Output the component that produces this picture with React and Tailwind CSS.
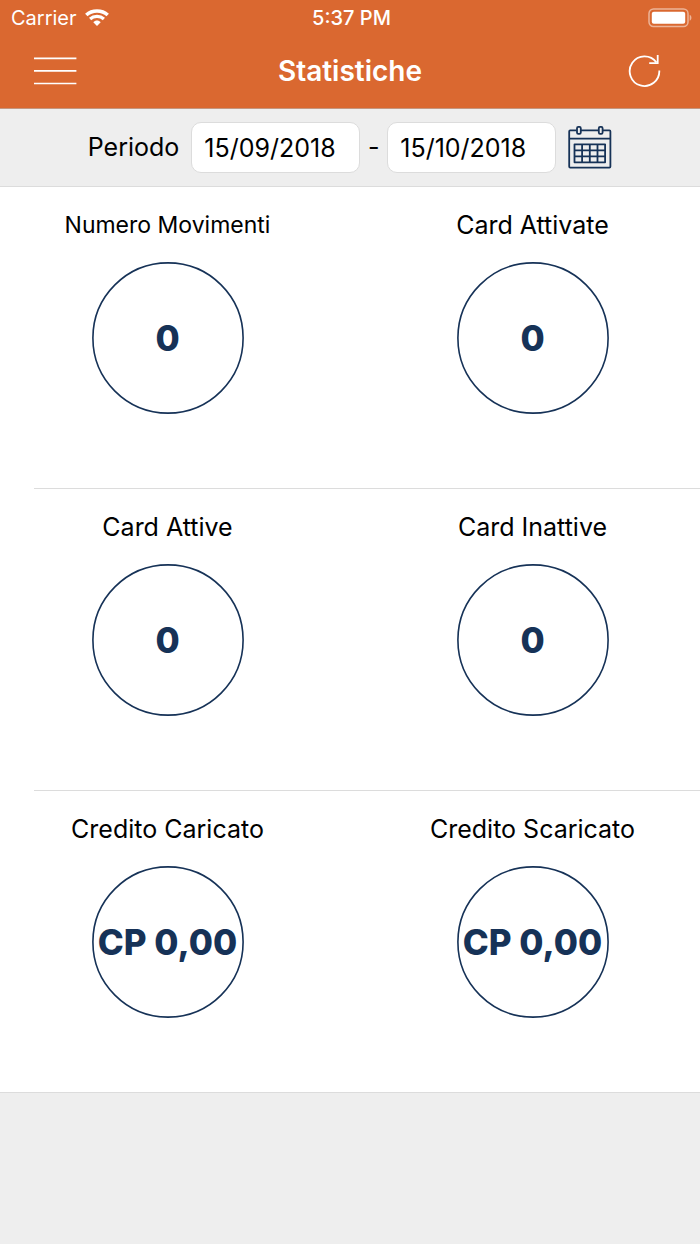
import { useState } from 'react'

const rows = [
  [
    { label: 'Numero Movimenti', value: '0', size: 'text-[23px]' },
    { label: 'Card Attivate', value: '0', size: 'text-[25px]' },
  ],
  [
    { label: 'Card Attive', value: '0', size: 'text-[25px]' },
    { label: 'Card Inattive', value: '0', size: 'text-[25px]' },
  ],
  [
    { label: 'Credito Caricato', value: 'CP 0,00', size: 'text-[25px]' },
    { label: 'Credito Scaricato', value: 'CP 0,00', size: 'text-[25px]' },
  ],
]

function WifiIcon() {
  return (
    <svg width="24" height="18" viewBox="0 0 24 18" fill="none" stroke="white" aria-hidden="true">
      <path d="M1.3 6C7.1 0.7 16.9 0.7 22.7 6" strokeWidth="3.6" />
      <path d="M5.1 10C8.8 6.6 15.2 6.6 18.9 10" strokeWidth="3.2" />
      <path d="M8.3 13.2C10.4 10.9 13.6 10.9 15.7 13.2L12 17Z" fill="white" stroke="none" />
    </svg>
  )
}

function BatteryIcon() {
  return (
    <svg width="44" height="20" viewBox="0 0 44 20" fill="none" aria-hidden="true">
      <rect x="1" y="1" width="39" height="17.5" rx="4.5" stroke="white" strokeOpacity="0.5" strokeWidth="1.5" />
      <rect x="3.8" y="3.8" width="33.4" height="12" rx="2" fill="white" />
      <path d="M41.7 6.8C44 7.8 44 11.8 41.7 12.8Z" fill="white" fillOpacity="0.5" />
    </svg>
  )
}

function MenuIcon() {
  return (
    <svg width="43" height="30" viewBox="0 0 43 30" stroke="white" strokeWidth="1.7" aria-hidden="true">
      <path d="M0 2.3H42.4M0 14.9H42.4M0 27.5H42.4" />
    </svg>
  )
}

function ReloadIcon() {
  return (
    <svg width="42" height="34" viewBox="-5 0 42 34" fill="none" stroke="white" strokeWidth="1.8" aria-hidden="true">
      <path d="M30.3 16.5A14.8 14.8 0 1 1 27.4 8.4" />
      <path d="M28.7 1V9.2H20.2" />
    </svg>
  )
}

function CalendarIcon() {
  return (
    <svg width="44" height="44" viewBox="0 0 44 44" fill="none" stroke="#163257" strokeWidth="1.8" strokeLinejoin="round" aria-hidden="true">
      <path d="M8.5 4.4H2.2Q1.2 4.4 1.2 5.4V40.6Q1.2 41.6 2.2 41.6H41.4Q42.4 41.6 42.4 40.6V5.4Q42.4 4.4 41.4 4.4H35M13 4.4H30.2M1.2 12.7H42.4" />
      <rect x="9" y="0.9" width="3.8" height="7" rx="1.3" />
      <rect x="30.8" y="0.9" width="3.8" height="7" rx="1.3" />
      <path d="M6.5 18.3H37.1V36.3H6.5ZM6.5 24.3H37.1M6.5 30.3H37.1M14.1 18.3V36.3M21.8 18.3V36.3M29.5 18.3V36.3" />
    </svg>
  )
}

function Ring() {
  return (
    <svg viewBox="0 0 152 152" fill="none" className="absolute inset-0 size-full" aria-hidden="true">
      <circle cx="76" cy="76" r="75.1" stroke="#163257" strokeWidth="1.6" />
    </svg>
  )
}

function DateInput({ label, value, onChange }) {
  return (
    <input
      type="text"
      aria-label={label}
      value={value}
      onChange={(e) => onChange(e.target.value)}
      className="w-[169px] h-[51px] rounded-[10px] border border-[#dcdcdc] bg-white pl-3 text-[25px] text-black outline-none"
    />
  )
}

function StatCell({ stat }) {
  return (
    <div className="flex flex-col items-center gap-[21px]">
      <h2 className={`leading-8 ${stat.size}`}>{stat.label}</h2>
      <div className="relative flex size-[152px] items-center justify-center text-[35px] font-extrabold whitespace-nowrap text-[#163257]">
        <Ring />
        {stat.value}
      </div>
    </div>
  )
}

export default function App() {
  const [from, setFrom] = useState('15/09/2018')
  const [to, setTo] = useState('15/10/2018')

  return (
    <div className="min-h-screen bg-[#eeeeee] font-['Inter','Liberation_Sans',sans-serif] text-black">
      <header className="border-b border-[#c4967f] bg-[#da6830] text-white">
        <div className="grid h-9 grid-cols-3 items-center pr-2 pl-[11px] text-xl">
          <div className="flex items-center gap-2">
            <span>Carrier</span>
            <WifiIcon />
          </div>
          <span className="text-center font-medium">5:37 PM</span>
          <div className="flex justify-end">
            <BatteryIcon />
          </div>
        </div>
        <div className="grid h-[72px] grid-cols-3 items-center px-[34px] pb-0.5">
          <button type="button" aria-label="Menu" className="justify-self-start">
            <MenuIcon />
          </button>
          <h1 className="text-center text-[28px] font-semibold">Statistiche</h1>
          <button type="button" aria-label="Aggiorna" className="justify-self-end">
            <ReloadIcon />
          </button>
        </div>
      </header>

      <div className="flex h-[78px] items-center justify-center border-b border-[#dcdcdc] text-[25px]">
        <span className="mr-3">Periodo</span>
        <DateInput label="Dal" value={from} onChange={setFrom} />
        <span className="w-[27px] text-center">-</span>
        <DateInput label="Al" value={to} onChange={setTo} />
        <button type="button" aria-label="Calendario" className="ml-3">
          <CalendarIcon />
        </button>
      </div>

      <main className="border-b border-[#dcdcdc] bg-white">
        {rows.map((row, i) => (
          <section key={row[0].label}>
            {i > 0 && <div className="ml-[34px] h-px bg-[#dcdcdc]"></div>}
            <div className="grid grid-cols-2 gap-[30px] pt-[22px] pb-[74px]">
              {row.map((stat) => (
                <StatCell key={stat.label} stat={stat} />
              ))}
            </div>
          </section>
        ))}
      </main>
    </div>
  )
}
